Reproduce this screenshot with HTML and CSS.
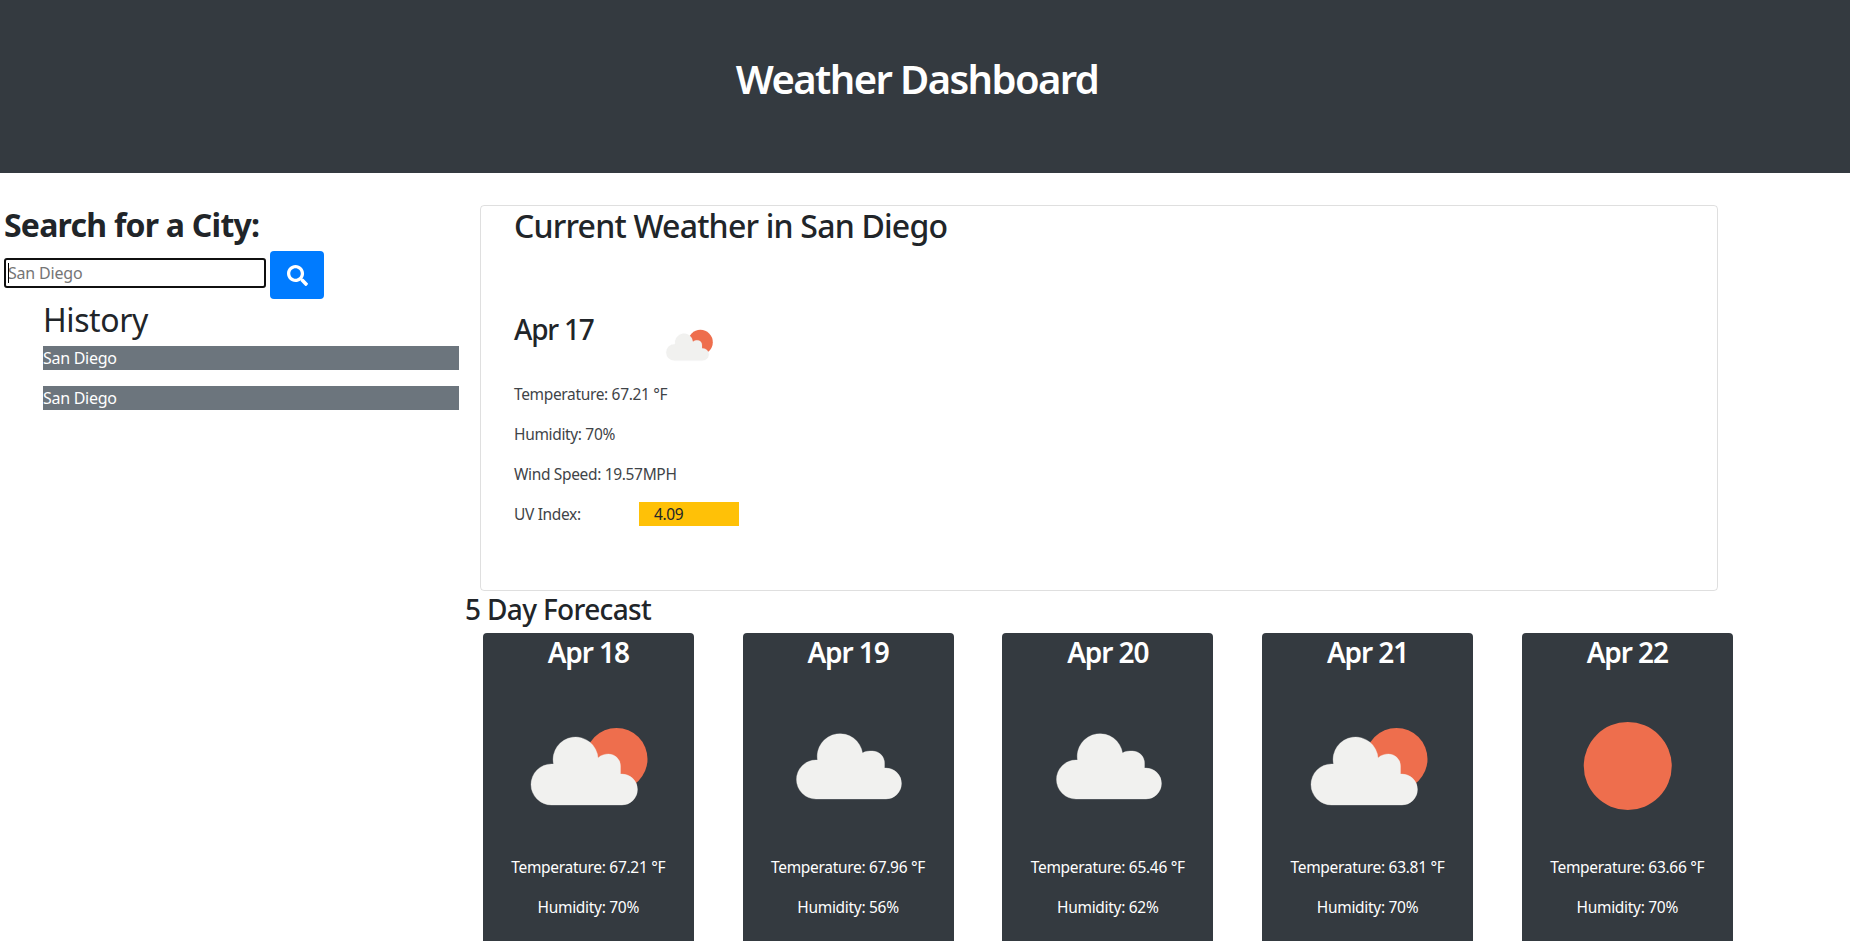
FILE: index.html
```html
<!DOCTYPE html>
<html lang="en">
<head>
<meta charset="utf-8">
<title>Weather Dashboard</title>
<link rel="stylesheet" href="styles.css">
</head>
<body>
<svg class="defs" width="0" height="0" aria-hidden="true">
  <symbol id="cloud-sun" viewBox="0 0 120 120">
    <circle cx="88.500" cy="53" r="31" fill="#ee6e4d"/>
    <path class="cloud" d="M23.500 99A20.500 20.500 0 0 1 23.500 58H25.500A22.500 22.500 0 1 1 70 52C73 49 77 48 80.500 48A12 12 0 0 1 92.500 60V68H94A15.500 15.500 0 0 1 94 99Z"/>
  </symbol>
  <symbol id="cloud-only" viewBox="0 0 120 120">
    <path class="cloud" d="M28 93A19.500 19.500 0 0 1 28 54H29.500A22.500 22.500 0 1 1 74.500 47C77.500 45 81 45 84.500 45A12 12 0 0 1 96.500 57V62H98A15.500 15.500 0 0 1 98 93Z"/>
  </symbol>
  <symbol id="sun" viewBox="0 0 120 120">
    <circle cx="60.750" cy="60" r="44" fill="#ee6e4d"/>
  </symbol>
</svg>
<header class="banner"><h1 class="banner-title">Weather Dashboard</h1></header>
<main class="layout">
  <aside class="sidebar">
    <h2 class="search-title">Search for a City:</h2>
    <form class="search-form">
      <span class="input-wrap">
        <input class="search-input" type="text" placeholder="San Diego" aria-label="City">
        <span class="caret"></span>
      </span>
      <button class="search-btn" type="button" aria-label="Search">
        <svg class="search-icon" viewBox="0 0 512 512"><path fill="#fff" d="M505 442.700L405.300 343c-4.500-4.500-10.600-7-17-7H372c27.600-35.300 44-79.700 44-128C416 93.100 322.900 0 208 0S0 93.100 0 208s93.100 208 208 208c48.300 0 92.700-16.400 128-44v16.300c0 6.400 2.500 12.500 7 17l99.700 99.700c9.400 9.400 24.600 9.400 33.900 0l28.300-28.300c9.400-9.400 9.400-24.600.1-34zM208 336c-70.700 0-128-57.200-128-128 0-70.700 57.200-128 128-128 70.700 0 128 57.200 128 128 0 70.700-57.200 128-128 128z"/></svg>
      </button>
    </form>
    <section class="history">
      <h3 class="history-title">History</h3>
      <div class="history-item">San Diego</div>
      <div class="history-item">San Diego</div>
    </section>
  </aside>
  <section class="content">
    <article class="current">
      <h2 class="current-title">Current Weather in San Diego</h2>
      <div class="current-head">
        <h3 class="current-date">Apr 17</h3>
        <svg class="current-icon"><use href="#cloud-sun"/></svg>
      </div>
      <p class="stat">Temperature: 67.21 °F</p>
      <p class="stat">Humidity: 70%</p>
      <p class="stat">Wind Speed: 19.57MPH</p>
      <p class="stat uv-row"><span class="uv-label">UV Index:</span><span class="uv-badge">4.09</span></p>
    </article>
    <h3 class="forecast-title">5 Day Forecast</h3>
    <div class="forecast">
      <article class="day">
        <h3 class="day-date">Apr 18</h3>
        <svg class="day-icon"><use href="#cloud-sun"/></svg>
        <p class="day-stat">Temperature: 67.21 °F</p>
        <p class="day-stat">Humidity: 70%</p>
      </article>
      <article class="day">
        <h3 class="day-date">Apr 19</h3>
        <svg class="day-icon"><use href="#cloud-only"/></svg>
        <p class="day-stat">Temperature: 67.96 °F</p>
        <p class="day-stat">Humidity: 56%</p>
      </article>
      <article class="day">
        <h3 class="day-date">Apr 20</h3>
        <svg class="day-icon"><use href="#cloud-only"/></svg>
        <p class="day-stat">Temperature: 65.46 °F</p>
        <p class="day-stat">Humidity: 62%</p>
      </article>
      <article class="day">
        <h3 class="day-date">Apr 21</h3>
        <svg class="day-icon"><use href="#cloud-sun"/></svg>
        <p class="day-stat">Temperature: 63.81 °F</p>
        <p class="day-stat">Humidity: 70%</p>
      </article>
      <article class="day">
        <h3 class="day-date">Apr 22</h3>
        <svg class="day-icon"><use href="#sun"/></svg>
        <p class="day-stat">Temperature: 63.66 °F</p>
        <p class="day-stat">Humidity: 70%</p>
      </article>
    </div>
  </section>
</main>
</body>
</html>
```
FILE: styles.css
```css
* { box-sizing: border-box; }
html { overflow: hidden; height: 941px; }
body {
  margin: 0;
  font-family: "Noto Sans", "Open Sans", sans-serif;
  font-size: 16px;
  line-height: 24px;
  color: #212529;
  background: #fff;
  letter-spacing: -0.2px;
}
h1, h2, h3, p { margin: 0; }
.defs { position: absolute; }
.cloud { fill: #f1f1ef; stroke: rgba(241, 241, 239, 0.4); stroke-width: 0.8; }

.banner { height: 173px; background: #343a40; padding: 55px 16px 0 0; }
.banner-title {
  text-align: center;
  color: #fff;
  font-size: 40px;
  line-height: 48px;
  font-weight: 600;
  letter-spacing: -1.6px;
}

.layout { display: flex; align-items: flex-start; padding-top: 32px; }
.sidebar { width: 465px; flex: none; padding: 1px 0 0 4px; }
.search-title { font-size: 32px; line-height: 38px; font-weight: 700; letter-spacing: -0.76px; }
.search-form { display: flex; align-items: flex-start; gap: 4px; margin-top: 7px; }
.input-wrap { position: relative; display: block; margin-top: 7px; }
.search-input {
  display: block;
  width: 262px;
  height: 30px;
  border: 2px solid #101010;
  border-radius: 3px;
  padding: 0 2px;
  font: inherit;
  letter-spacing: inherit;
  outline: none;
}
.search-input::placeholder { color: #757575; opacity: 1; }
.caret { position: absolute; left: 4px; top: 5px; width: 1px; height: 20px; background: #000; }
.search-btn {
  width: 54px;
  height: 48px;
  border: 0;
  border-radius: 4px;
  background: #007bff;
  display: flex;
  align-items: center;
  justify-content: center;
  padding: 0;
}
.search-icon { width: 21px; height: 21px; }
.history { margin: 1px 0 0 39px; width: 416px; }
.history-title { font-size: 32px; line-height: 39px; padding-bottom: 7px; font-weight: 400; letter-spacing: -0.4px; }
.history-item { height: 24px; margin-bottom: 16px; background: #6c757d; color: #fff; letter-spacing: -0.28px; }

.content { flex: none; width: 1290px; }
.current {
  margin-left: 15px;
  width: 1238px;
  height: 386px;
  border: 1px solid rgba(0, 0, 0, 0.125);
  border-radius: 4px;
  padding: 1px 33px 0;
}
.current-title { font-size: 32px; line-height: 38px; font-weight: 500; letter-spacing: -0.8px; }
.current-head { display: flex; align-items: flex-start; margin-top: 67px; height: 70px; }
.current-date { width: 151px; font-size: 28px; line-height: 34px; font-weight: 500; letter-spacing: -1.2px; }
.current-icon { width: 48px; height: 48px; margin-top: 9px; }
.stat { height: 24px; margin-bottom: 16px; color: #3f4448; font-size: 15.500px; letter-spacing: -0.34px; }
.uv-row { display: flex; }
.uv-label { width: 125px; }
.uv-badge { width: 100px; background: #ffc107; color: #212529; padding-left: 15px; }

.forecast-title { font-size: 28px; line-height: 34px; font-weight: 500; letter-spacing: -0.65px; margin-top: 1px; height: 41px; }
.forecast { display: flex; gap: 48.750px; margin-left: 17.750px; }
.day {
  flex: none;
  width: 211px;
  height: 320px;
  background: #343a40;
  color: #fff;
  border-radius: 4px 4px 0 0;
  text-align: center;
}
.day-date { font-size: 28px; line-height: 34px; font-weight: 600; letter-spacing: -1.1px; padding-top: 2px; height: 36px; }
.day-icon { display: block; width: 120px; height: 120px; margin: 37px auto 0; }
.day-stat { height: 24px; margin-bottom: 16px; font-size: 15.500px; letter-spacing: -0.3px; }
.day-icon + .day-stat { margin-top: 29px; }
```
